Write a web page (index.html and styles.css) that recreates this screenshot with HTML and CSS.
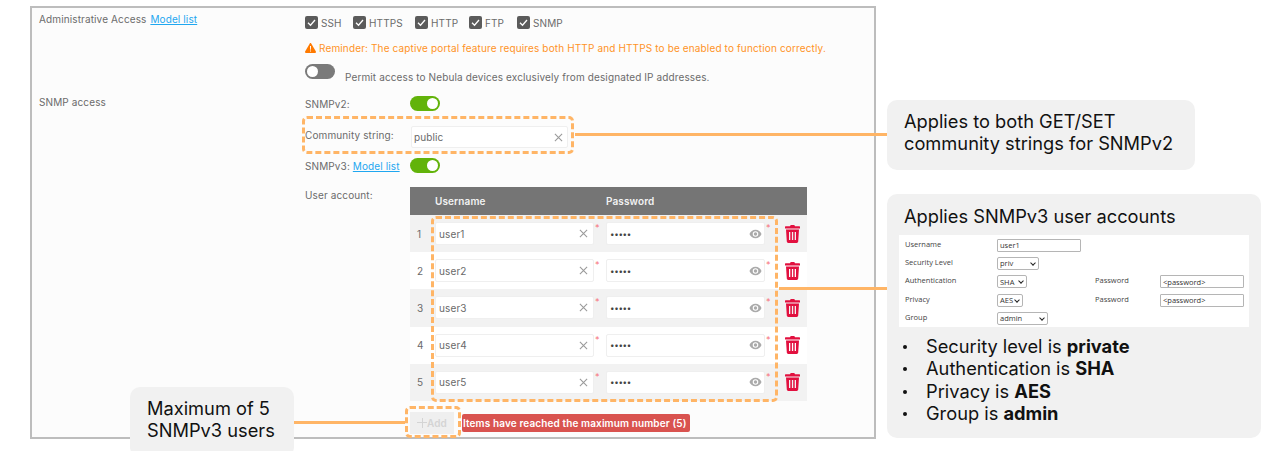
FILE: index.html
```html
<!DOCTYPE html>
<html lang="en">
<head>
<meta charset="utf-8">
<title>SNMP access</title>
<link rel="stylesheet" href="styles.css">
</head>
<body>
<svg class="defs" width="0" height="0" aria-hidden="true">
  <symbol id="x" viewBox="0 0 10 10"><path d="M1 1l8 8M9 1l-8 8" fill="none" stroke="#9a9a9a" stroke-width="1.2"/></symbol>
  <symbol id="eye" viewBox="0 0 14 10"><path fill-rule="evenodd" d="M7 .5C4 .5 1.600 2.300.5 5c1.100 2.700 3.500 4.500 6.500 4.500s5.400-1.800 6.500-4.500C12.400 2.300 10 .5 7 .5zM7 2a3 3 0 1 1 0 6 3 3 0 0 1 0-6z" fill="#aaa"/><circle cx="7" cy="5" r="1.800" fill="#aaa"/></symbol>
  <symbol id="trash" viewBox="0 0 15 18"><path fill-rule="evenodd" d="M5 1.200 5.700 0h3.600l.7 1.200h4.400c.3 0 .6.300.6.600v1.600H0V1.800c0-.3.300-.6.600-.6zM1 4.400h13l-.8 12.200c-.1.800-.7 1.400-1.500 1.400H3.300c-.8 0-1.400-.6-1.500-1.400zM4 7v8h1.300V7zm2.900 0v8h1.300V7zm2.800 0v8H11V7z" fill="#e2103f"/></symbol>
  <symbol id="warn" viewBox="0 0 11 10"><path d="M5.500 0c.3 0 .5.100.7.400l4.700 8.200c.3.600-.1 1.400-.8 1.400H.9c-.7 0-1.100-.8-.8-1.400L4.800.4c.2-.3.400-.4.700-.4z" fill="#ff7a00"/><path d="M5 3h1l-.1 3.700h-.8zM5 7.400h1v1H5z" fill="#fff"/></symbol>
  <symbol id="check" viewBox="0 0 13 13"><rect width="13" height="13" rx="2" fill="#5b5b5b"/><path d="M3 6.800l2.500 2.400L10 4" fill="none" stroke="#fff" stroke-width="1.300"/></symbol>
</svg>

<main class="canvas">
  <section class="panel">
    <div class="row row-admin">
      <div class="row-label">Administrative Access <a class="link link-admin" href="#">Model list</a></div>
      <div class="row-body">
        <div class="checks">
          <label class="check c-ssh"><svg class="check-box"><use href="#check"/></svg>SSH</label>
          <label class="check c-https"><svg class="check-box"><use href="#check"/></svg>HTTPS</label>
          <label class="check c-http"><svg class="check-box"><use href="#check"/></svg>HTTP</label>
          <label class="check c-ftp"><svg class="check-box"><use href="#check"/></svg>FTP</label>
          <label class="check"><svg class="check-box"><use href="#check"/></svg>SNMP</label>
        </div>
        <p class="reminder"><svg class="warn"><use href="#warn"/></svg>Reminder: The captive portal feature requires both HTTP and HTTPS to be enabled to function correctly.</p>
        <div class="permit"><span class="toggle off"></span><span class="permit-text">Permit access to Nebula devices exclusively from designated IP addresses.</span></div>
      </div>
    </div>

    <div class="row row-snmp">
      <div class="row-label snmp-label">SNMP access</div>
      <div class="row-body">
        <div class="line line-v2"><span class="line-label">SNMPv2:</span><span class="toggle on"></span></div>
        <div class="line line-comm"><span class="line-label comm-label">Community string:</span>
          <span class="field comm-field"><span class="field-text">public</span><svg class="ico-x"><use href="#x"/></svg></span></div>
        <div class="line line-v3"><span class="line-label">SNMPv3: <a class="link" href="#">Model list</a></span><span class="toggle on"></span></div>
        <div class="line line-users">
          <span class="line-label users-label">User account:</span>
          <div class="users">
            <div class="thead"><span class="th-user">Username</span><span>Password</span></div>
            <div class="urow"><span class="num">1</span>
              <span class="field f-user"><span class="field-text">user1</span><svg class="ico-x"><use href="#x"/></svg></span><span class="req">*</span>
              <span class="field f-pass"><span class="dots">•••••</span><svg class="ico-eye"><use href="#eye"/></svg></span><span class="req">*</span>
              <svg class="ico-trash"><use href="#trash"/></svg></div>
            <div class="urow"><span class="num">2</span>
              <span class="field f-user"><span class="field-text">user2</span><svg class="ico-x"><use href="#x"/></svg></span><span class="req">*</span>
              <span class="field f-pass"><span class="dots">•••••</span><svg class="ico-eye"><use href="#eye"/></svg></span><span class="req">*</span>
              <svg class="ico-trash"><use href="#trash"/></svg></div>
            <div class="urow"><span class="num">3</span>
              <span class="field f-user"><span class="field-text">user3</span><svg class="ico-x"><use href="#x"/></svg></span><span class="req">*</span>
              <span class="field f-pass"><span class="dots">•••••</span><svg class="ico-eye"><use href="#eye"/></svg></span><span class="req">*</span>
              <svg class="ico-trash"><use href="#trash"/></svg></div>
            <div class="urow"><span class="num">4</span>
              <span class="field f-user"><span class="field-text">user4</span><svg class="ico-x"><use href="#x"/></svg></span><span class="req">*</span>
              <span class="field f-pass"><span class="dots">•••••</span><svg class="ico-eye"><use href="#eye"/></svg></span><span class="req">*</span>
              <svg class="ico-trash"><use href="#trash"/></svg></div>
            <div class="urow"><span class="num">5</span>
              <span class="field f-user"><span class="field-text">user5</span><svg class="ico-x"><use href="#x"/></svg></span><span class="req">*</span>
              <span class="field f-pass"><span class="dots">•••••</span><svg class="ico-eye"><use href="#eye"/></svg></span><span class="req">*</span>
              <svg class="ico-trash"><use href="#trash"/></svg></div>
            <div class="add-row">
              <span class="add-btn"><span class="plus"></span>Add</span>
              <span class="badge">Items have reached the maximum number (5)</span>
            </div>
          </div>
        </div>
      </div>
    </div>
  </section>

  <div class="dash dash-comm"></div>
  <div class="dash dash-users"></div>
  <div class="dash dash-add"></div>
  <div class="wire wire-comm"></div>
  <div class="wire wire-users"></div>
  <div class="wire wire-add"></div>

  <aside class="note note-comm">Applies to both GET/SET<br>community strings for SNMPv2</aside>

  <aside class="note note-users">
    <div class="note-title">Applies SNMPv3 user accounts</div>
    <div class="sample">
      <span class="s-label">Username</span><span class="s-input s-w84">user1</span><span></span><span></span>
      <span class="s-label">Security Level</span><span class="s-select s-w42">priv<i class="chev"></i></span><span></span><span></span>
      <span class="s-label">Authentication</span><span class="s-select s-w30">SHA<i class="chev"></i></span><span class="s-label">Password</span><span class="s-input s-w84">&lt;password&gt;</span>
      <span class="s-label">Privacy</span><span class="s-select s-w26">AES<i class="chev"></i></span><span class="s-label">Password</span><span class="s-input s-w84">&lt;password&gt;</span>
      <span class="s-label">Group</span><span class="s-select s-w51">admin<i class="chev"></i></span><span></span><span></span>
    </div>
    <ul class="facts">
      <li>Security level is <b>private</b></li>
      <li>Authentication is <b>SHA</b></li>
      <li>Privacy is <b>AES</b></li>
      <li>Group is <b>admin</b></li>
    </ul>
  </aside>

  <aside class="note note-add">Maximum of 5<br>SNMPv3 users</aside>
</main>
</body>
</html>
```

FILE: styles.css
```css
* { box-sizing: border-box; }
html, body { margin: 0; padding: 0; background: #fff; }
.defs { position: absolute; }
.canvas {
  position: relative;
  width: 1272px;
  height: 451px;
  overflow: hidden;
  font-family: Inter, "Liberation Sans", sans-serif;
}

/* form panel */
.panel {
  margin: 6px 0 0 30px;
  width: 846px;
  height: 433px;
  border: 2px solid #bdbdbd;
  background: #fcfcfc;
  padding: 0 0 0 7px;
  color: #6b6b6b;
  font-size: 10px;
  letter-spacing: .12px;
}
.row { display: flex; }
.row-label { width: 266px; flex: none; padding-top: 5px; line-height: 12px; }
.row-body { flex: 1; }
.link { color: #1fa7f0; text-decoration: underline; }
.link-admin { margin-left: 1px; }

.checks { display: flex; align-items: center; height: 13px; margin-top: 8px; }
.check { display: flex; align-items: center; width: 48px; }
.c-https { width: 62px; }
.c-http { width: 54px; }
.check-box { width: 13px; height: 13px; margin-right: 3px; flex: none; }
.reminder {
  margin: 12px 0 0;
  height: 14px;
  line-height: 14px;
  color: #ff9327;
  letter-spacing: .14px;
  display: flex;
  align-items: center;
}
.warn { width: 11px; height: 10px; margin-right: 3px; flex: none; }
.permit { display: flex; margin-top: 9px; height: 24px; }
.permit-text { margin: 7px 0 0 10px; line-height: 12px; }

.toggle {
  display: block;
  position: relative;
  width: 30px;
  height: 15px;
  border-radius: 8px;
  flex: none;
}
.toggle::after {
  content: "";
  position: absolute;
  top: 2px;
  width: 11px;
  height: 11px;
  border-radius: 50%;
  background: #fff;
}
.toggle.off { background: #7a7a7a; }
.toggle.off::after { left: 2px; }
.toggle.on { background: #62b30a; }
.toggle.on::after { right: 2px; }

.row-snmp { margin-top: 8px; }
.snmp-label { padding-top: 0; }
.line { display: flex; }
.line-label { width: 105px; flex: none; line-height: 12px; }
.line-v2 { height: 30px; padding-top: 0; }
.line-v2 .line-label { padding-top: 2px; }
.line-comm { height: 32px; }
.comm-label { padding-top: 3px; }
.line-v3 { height: 29px; }
.line-v3 .line-label { padding-top: 2px; }
.users-label { padding-top: 2px; }

.field {
  display: flex;
  align-items: center;
  justify-content: space-between;
  background: #fff;
  border: 1px solid #efefef;
  border-radius: 2px;
  flex: none;
  padding: 0 5px 0 3px;
  height: 23px;
}
.comm-field { width: 157px; height: 22px; margin-left: 1px; padding: 0 4px 0 2px; }
.ico-x { width: 9px; height: 9px; flex: none; }
.ico-eye { width: 13px; height: 10px; flex: none; margin-right: -3px; }
.ico-trash { width: 15px; height: 18px; flex: none; margin-left: 8px; }

.users { width: 397px; }
.thead {
  display: flex;
  align-items: center;
  height: 28px;
  background: #757575;
  color: #f2f2f2;
  font-weight: 600;
  padding-left: 25px;
}
.th-user { width: 171px; }
.urow {
  display: flex;
  align-items: center;
  height: 37.200px;
  background: #f2f2f2;
  padding-left: 7px;
}
.urow:nth-child(odd) { background: #fff; }
.num { width: 18px; flex: none; }
.f-user { width: 159px; }
.f-pass { width: 159px; }
.req {
  width: 12px;
  flex: none;
  color: #f7737d;
  font-size: 9px;
  line-height: 9px;
  padding-left: 1px;
  align-self: flex-start;
  margin-top: 8px;
}
.field-text { color: #6a6a6a; }
.dots { color: #444; font-size: 8px; letter-spacing: -.3px; }

.add-row { display: flex; align-items: center; margin-top: 11px; height: 22px; }
.add-btn {
  display: flex;
  align-items: center;
  width: 44px;
  height: 22px;
  background: #efefef;
  color: #d4d4d4;
  font-weight: 600;
  padding-left: 7px;
}
.plus {
  position: relative;
  width: 10px;
  height: 10px;
  background:
    linear-gradient(#d4d4d4, #d4d4d4) center / 10px 1px no-repeat,
    linear-gradient(#d4d4d4, #d4d4d4) center / 1px 10px no-repeat;
}
.badge {
  margin-left: 8px;
  height: 18px;
  line-height: 18px;
  padding: 0 3px 0 1px;
  width: 228px;
  background: #d9534f;
  border-radius: 2px;
  color: #fff;
  font-weight: 600;
  white-space: nowrap;
}

/* annotation overlay */
.dash {
  position: absolute;
  border: 3px dashed #ffb566;
  border-radius: 5px;
}
.dash-comm { left: 302px; top: 116px; width: 272px; height: 38px; }
.dash-users { left: 431px; top: 216px; width: 347px; height: 186px; }
.dash-add { left: 405px; top: 406px; width: 56px; height: 32px; }
.wire { position: absolute; height: 3px; background: #ffb566; }
.wire-comm { left: 575px; top: 133px; width: 312px; }
.wire-users { left: 779px; top: 287px; width: 108px; }
.wire-add { left: 294px; top: 421px; width: 111px; }

.note {
  position: absolute;
  background: #f1f1f1;
  border-radius: 10px;
  color: #111;
  font-size: 18.25px;
  line-height: 22.400px;
}
.note-comm { left: 887px; top: 100px; width: 308px; height: 70px; padding: 10px 0 0 17px; }
.note-add { left: 130px; top: 387px; width: 164px; height: 70px; padding: 10px 0 0 17px; }
.note-users { left: 887px; top: 194px; width: 374px; height: 244px; padding: 11px 12px 0; }
.note-title { padding-left: 5px; }

.sample {
  display: grid;
  grid-template-columns: 92px 98px 65px 1fr;
  grid-auto-rows: 18.300px;
  align-items: center;
  width: 350px;
  height: 92px;
  margin-top: 7.600px;
  padding: 1px 0 0 6px;
  background: #fff;
  font-family: "Open Sans", "Liberation Sans", sans-serif;
  font-size: 7.5px;
  line-height: 10px;
  color: #444;
}
.s-label { white-space: nowrap; padding-bottom: 3px; }
.s-input, .s-select {
  display: flex;
  align-items: center;
  height: 13px;
  padding-left: 2px;
  border: 1px solid #b5b5b5;
  background: #fff;
  color: #333;
  border-radius: 1px;
}
.s-select { position: relative; padding-left: 2px; border-radius: 2px; }
.chev {
  position: absolute;
  right: 3px;
  top: 3px;
  width: 4px;
  height: 4px;
  border-right: 1px solid #222;
  border-bottom: 1px solid #222;
  transform: rotate(45deg);
}
.s-w84 { width: 84px; }
.s-w42 { width: 42px; }
.s-w30 { width: 30px; }
.s-w26 { width: 26px; }
.s-w51 { width: 51px; }

.facts { list-style: none; margin: 8px 0 0; padding: 0 0 0 27px; }
.facts li { position: relative; }
.facts li::before {
  content: "";
  position: absolute;
  left: -23px;
  top: 10px;
  width: 4px;
  height: 4px;
  border-radius: 50%;
  background: #111;
}
.facts b { font-weight: 700; }
```
